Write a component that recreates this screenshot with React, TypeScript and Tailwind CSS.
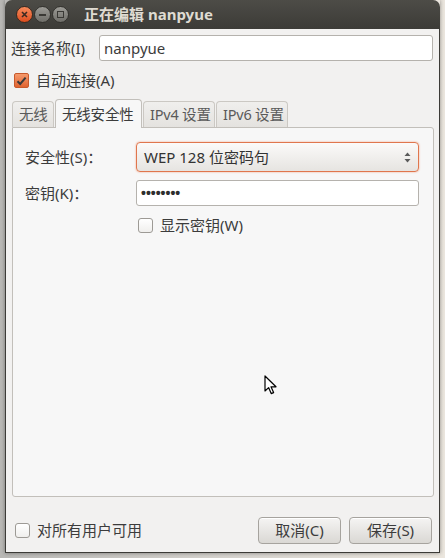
import React from "react";

const font = { fontFamily: '"Noto Sans", "Noto Sans CJK SC", sans-serif' };

function CheckBox({ checked }: { checked?: boolean }) {
  if (checked) {
    return (
      <div className="w-[15px] h-[15px] rounded-[2px] border border-[#c85a2c] bg-gradient-to-b from-[#f59a6c] to-[#e0632f] flex items-center justify-center">
        <svg width="11" height="10" viewBox="0 0 11 10">
          <path d="M1.5 5.2 L4.2 8 L9.6 1.6" fill="none" stroke="#3a3a3a" strokeWidth="2" />
        </svg>
      </div>
    );
  }
  return (
    <div className="w-[15px] h-[15px] rounded-[3px] border border-[#9d9a95] bg-gradient-to-b from-[#ffffff] to-[#f0efed]" />
  );
}

function Tab({ label, active, w }: { label: string; active?: boolean; w: string }) {
  return (
    <div
      className={
        active
          ? `${w} h-[29px] -mb-px relative z-10 flex items-center pl-[6px] whitespace-nowrap border border-b-0 border-[#c2bfba] rounded-t-[4px] bg-[#f7f7f7] text-[#3c3c3c]`
          : `${w} h-[26px] flex items-center pl-[6px] whitespace-nowrap overflow-hidden border border-b-0 border-[#cbc8c3] rounded-t-[4px] bg-gradient-to-b from-[#f0efed] to-[#e4e2df] text-[#5a5a5a]`
      }
    >
      <span className="leading-none tracking-[-0.2px]">{label}</span>
    </div>
  );
}

function Button({ label }: { label: string }) {
  return (
    <div className="w-[83px] h-[27px] flex items-center justify-center rounded-[4px] border border-[#a6a39e] bg-gradient-to-b from-[#f5f4f3] to-[#dad8d4] text-[#3c3c3c] shadow-[inset_0_1px_0_#ffffff]">
      <span className="leading-none">{label}</span>
    </div>
  );
}

export default function App() {
  return (
    <div
      className="relative w-[445px] h-[558px] overflow-hidden bg-gradient-to-r from-[#b9b8b5] via-[#d6d3ce] to-[#ebe6de] text-[15px] text-[#3c3c3c]"
      style={font}
    >
      <div className="ml-[5px] w-[435px] h-[553px] flex flex-col shadow-[0_0_4px_rgba(0,0,0,0.4)]">
        {/* title bar */}
        <div className="h-[30px] rounded-t-[7px] bg-gradient-to-b from-[#4d4c47] to-[#3c3b37] flex items-center pl-[11px]">
          <div className="flex items-center gap-[1px]">
            <div className="w-[17px] h-[17px] rounded-full bg-gradient-to-b from-[#f78a5a] to-[#dc4c1c] border border-[#3a2a20] flex items-center justify-center">
              <svg width="7" height="7" viewBox="0 0 7 7">
                <path d="M1 1 L6 6 M6 1 L1 6" stroke="#3a2a22" strokeWidth="1.6" />
              </svg>
            </div>
            <div className="w-[17px] h-[17px] rounded-full bg-gradient-to-b from-[#9c9b96] to-[#6f6e69] border border-[#33322e] flex items-center justify-center">
              <div className="w-[7px] h-[2px] bg-[#3a3935]" />
            </div>
            <div className="w-[17px] h-[17px] rounded-full bg-gradient-to-b from-[#9c9b96] to-[#6f6e69] border border-[#33322e] flex items-center justify-center">
              <div className="w-[7px] h-[7px] border-[1.5px] border-[#3a3935]" />
            </div>
          </div>
          <span className="ml-[15px] font-bold text-[15px] text-[#dfdbd2] leading-none">正在编辑 nanpyue</span>
        </div>

        {/* body */}
        <div className="flex-1 flex flex-col bg-[#f2f1f0] border-x border-b border-[#3c3b37] px-[5px] pt-[6px] pb-[8px]">
          <div className="flex items-center h-[26px]">
            <span className="w-[88px] leading-none">连接名称(I)</span>
            <div className="w-[334px] h-[26px] flex items-center pl-[4px] bg-white border border-[#b5b2ad] rounded-[3px]">
              <span className="leading-none">nanpyue</span>
            </div>
          </div>

          <div className="flex items-center mt-[12px] ml-[3px] h-[15px] gap-[7px]">
            <CheckBox checked />
            <span className="leading-none">自动连接(A)</span>
          </div>

          <div className="flex items-end mt-[10px] ml-[1px] gap-[1px] h-[29px] text-[14.5px]">
            <Tab label="无线" w="w-[42px]" />
            <Tab label="无线安全性" w="w-[87px]" active />
            <Tab label="IPv4 设置" w="w-[72px]" />
            <Tab label="IPv6 设置" w="w-[72px]" />
          </div>

          <div className="ml-[1px] w-[422px] h-[370px] flex flex-col bg-[#f7f7f7] border border-[#c2bfba] rounded-b-[3px] rounded-tr-[3px] pl-[12px] pt-[14px]">
            <div className="flex items-center h-[30px]">
              <span className="w-[111px] leading-none">安全性(S)：</span>
              <div className="w-[283px] h-[30px] flex items-center justify-between pl-[7px] pr-[7px] rounded-[4px] border border-[#e0764d] bg-gradient-to-b from-[#fbfaf9] to-[#e6e4e1] shadow-[0_0_2px_#f0a080]">
                <span className="leading-none text-[#333333]">WEP 128 位密码句</span>
                <svg width="7" height="13" viewBox="0 0 7 13">
                  <path d="M0.5 5 L3.5 1.5 L6.5 5 Z" fill="#5a5a5a" />
                  <path d="M0.5 8 L3.5 11.5 L6.5 8 Z" fill="#5a5a5a" />
                </svg>
              </div>
            </div>

            <div className="flex items-center h-[26px] mt-[8px]">
              <span className="w-[111px] leading-none">密钥(K)：</span>
              <div className="w-[283px] h-[26px] flex items-center pl-[4px] bg-white border border-[#b5b2ad] rounded-[3px]">
                <span
                  className="leading-none text-[14px] font-bold text-[#2e2e2e]"
                  style={{ fontFamily: '"Liberation Sans", sans-serif' }}
                >
                  ••••••••
                </span>
              </div>
            </div>

            <div className="flex items-center mt-[12px] ml-[113px] h-[15px] gap-[7px]">
              <CheckBox />
              <span className="leading-none">显示密钥(W)</span>
            </div>
          </div>

          <div className="flex items-center mt-[20px] h-[27px]">
            <div className="flex items-center ml-[4px] gap-[7px]">
              <CheckBox />
              <span className="leading-none">对所有用户可用</span>
            </div>
            <div className="ml-auto mr-[2px] flex gap-[8px]">
              <Button label="取消(C)" />
              <Button label="保存(S)" />
            </div>
          </div>
        </div>
      </div>

      {/* mouse pointer */}
      <svg className="absolute left-[264px] top-[375px]" width="14" height="21" viewBox="0 0 14 21">
        <path
          d="M1 1 L1 16 L4.6 12.6 L7.2 18.6 L9.6 17.6 L7 11.8 L12 11.8 Z"
          fill="#ffffff"
          stroke="#000000"
          strokeWidth="1.2"
          strokeLinejoin="round"
        />
      </svg>
    </div>
  );
}
